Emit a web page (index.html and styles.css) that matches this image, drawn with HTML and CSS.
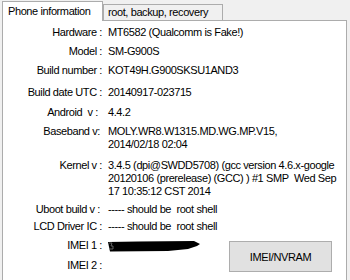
FILE: index.html
```html
<!DOCTYPE html>
<html>
<head>
    <meta charset="utf-8">
    <title>Phone information</title>
    <link rel="stylesheet" href="styles.css">
</head>
<body>
<div class="tabs">
    <div class="tab active">Phone information</div>
    <div class="tab">root, backup, recovery</div>
</div>
<div class="page">
    <div class="info">
        <div class="label">Hardware :</div>
        <div class="value">MT6582 (Qualcomm is Fake!)</div>

        <div class="label">Model :</div>
        <div class="value">SM-G900S</div>

        <div class="label">Build number :</div>
        <div class="value">KOT49H.G900SKSU1AND3</div>

        <div class="label">Build date UTC :</div>
        <div class="value">20140917-023715</div>

        <div class="label short">Android&nbsp; v :</div>
        <div class="value">4.4.2</div>

        <div class="label mid">Baseband v:</div>
        <div class="value">MOLY.WR8.W1315.MD.WG.MP.V15,<br>2014/02/18 02:04</div>

        <div class="label">Kernel v :</div>
        <div class="value">3.4.5 (dpi@SWDD5708) (gcc version 4.6.x-google<br>20120106 (prerelease) (GCC) ) #1 SMP&nbsp; Wed Sep<br>17 10:35:12 CST 2014</div>

        <div class="label mid">Uboot build v :</div>
        <div class="value">----- should be&nbsp; root shell</div>

        <div class="label">LCD Driver IC :</div>
        <div class="value">----- should be&nbsp; root shell</div>

        <div class="label">IMEI 1 :</div>
        <div class="value imei">
            <svg class="redact" width="94" height="13" viewBox="0 0 94 13">
                <path d="M0 3 L30 2.5 L86 2 L92 5 L89 7 L80 10 L60 12 L2 12.5 Z" fill="#000"/>
                <path d="M1 4 L4 4 L3 7 L5 7 L5 10 L1 10" fill="none" stroke="#777" stroke-width="0.8"/>
            </svg>
            <button class="nvram">IMEI/NVRAM</button>
        </div>

        <div class="label">IMEI 2 :</div>
        <div class="value"></div>
    </div>
</div>
</body>
</html>
```

FILE: styles.css
```css
body {
    margin: 0;
    background-color: #f0f0f0;
    font-family: "Liberation Sans", Arial, sans-serif;
    font-size: 11px;
    letter-spacing: -0.4px;
    color: #000;
    height: 280px;
    overflow: hidden;
}

.tabs {
    display: flex;
    align-items: flex-end;
    padding-left: 2px;
    height: 21px;
    position: relative;
    z-index: 1;
}

.tab {
    box-sizing: border-box;
    width: 120px;
    height: 16px;
    line-height: 15px;
    padding-left: 4px;
    white-space: nowrap;
    border: 1px solid #acacac;
    border-bottom: none;
    background-color: #f0f0f0;
    margin-bottom: 1px;
}

.tab.active {
    width: 101px;
    height: 20px;
    line-height: 16px;
    padding: 1px 0 0 5px;
    background-color: #fff;
    margin-bottom: 0;
}

.page {
    margin: -1px 0 0 2px;
    width: 343px;
    height: 259px;
    background-color: #fff;
    border: 1px solid #acacac;
    border-bottom: none;
}

.info {
    display: grid;
    grid-template-columns: 101px 1fr;
    grid-template-rows: 19px 19px 22px 20px 19px 34px 44px 17px 19px 20px 13px;
    column-gap: 4px;
    padding-top: 5px;
    line-height: 13px;
}

.label {
    text-align: right;
    white-space: nowrap;
    padding-right: 2px;
}

.label.mid {
    padding-right: 4px;
}

.label.short {
    padding-right: 6px;
}

.value {
    white-space: nowrap;
}

.imei {
    display: flex;
    justify-content: space-between;
    align-items: flex-start;
    height: 13px;
}

.redact {
    display: block;
}

.nvram {
    flex-shrink: 0;
    width: 103px;
    height: 31px;
    margin: 2px 14px 0 0;
    background-color: #e1e1e1;
    border: 1px solid #adadad;
    font-family: "Liberation Sans", Arial, sans-serif;
    font-size: 11px;
    letter-spacing: -0.4px;
    color: #000;
    padding: 0;
}
```
